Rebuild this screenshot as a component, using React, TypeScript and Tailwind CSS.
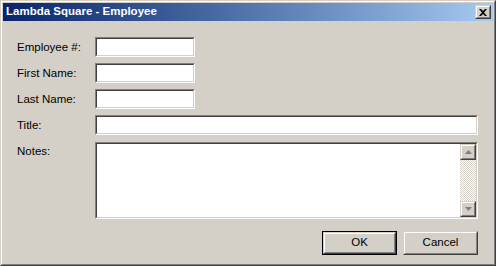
import React from 'react';

const FONT = "font-['Liberation_Sans',Arial,sans-serif]";

function Sunken({ className, children }: { className: string; children?: React.ReactNode }) {
  return (
    <div className={`border border-t-[#808080] border-l-[#808080] border-b-white border-r-white ${className}`}>
      <div className="h-full w-full border border-t-[#404040] border-l-[#404040] border-b-[#d4d0c8] border-r-[#d4d0c8] bg-white">
        {children}
      </div>
    </div>
  );
}

function Raised({ className, children }: { className: string; children?: React.ReactNode }) {
  return (
    <div className={`border border-t-[#d4d0c8] border-l-[#d4d0c8] border-b-[#404040] border-r-[#404040] bg-[#d4d0c8] ${className}`}>
      <div className="flex h-full w-full items-center justify-center border border-t-white border-l-white border-b-[#808080] border-r-[#808080]">
        {children}
      </div>
    </div>
  );
}

function Arrow({ up }: { up?: boolean }) {
  return (
    <svg width="7" height="4" viewBox="0 0 7 4">
      {up ? (
        <polygon points="3.5,0 7,4 0,4" fill="#808080" />
      ) : (
        <polygon points="0,0 7,0 3.5,4" fill="#808080" />
      )}
    </svg>
  );
}

function Field({ label, wide }: { label: string; wide?: boolean }) {
  return (
    <div className="flex h-5 items-center">
      <span className="w-[78px] pt-px text-[11.5px] text-black">{label}</span>
      <Sunken className={wide ? 'h-5 w-[383px]' : 'h-5 w-[100px]'} />
    </div>
  );
}

export default function App() {
  return (
    <div className={`h-[266px] w-[496px] ${FONT}`}>
      <div className="h-full w-full border border-t-[#d4d0c8] border-l-[#d4d0c8] border-b-[#404040] border-r-[#404040]">
        <div className="flex h-full w-full flex-col border border-t-white border-l-white border-b-[#808080] border-r-[#808080] bg-[#d4d0c8] p-px">
          {/* Title bar */}
          <div className="flex h-[18px] shrink-0 items-center justify-between bg-linear-to-r from-[#0a246a] to-[#a6caf0] pl-[3px] pr-[2px]">
            <span className="text-[11.5px] font-bold text-white">Lambda Square - Employee</span>
            <Raised className="h-[14px] w-4">
              <svg width="8" height="7" viewBox="0 0 8 7">
                <path d="M0 0h2l2 2 2-2h2L5 3.5 8 7H6L4 5 2 7H0l3-3.5z" fill="#000" />
              </svg>
            </Raised>
          </div>

          {/* Form */}
          <div className="flex flex-col pl-[14px] pt-4">
            <div className="flex flex-col gap-[6px]">
              <Field label="Employee #:" />
              <Field label="First Name:" />
              <Field label="Last Name:" />
              <Field label="Title:" wide />
            </div>

            <div className="mt-[7px] flex">
              <span className="w-[78px] pt-px text-[11.5px] text-black">Notes:</span>
              <Sunken className="h-[77px] w-[383px]">
                <div className="flex h-full justify-end">
                  <div className="flex h-full w-4 flex-col bg-[repeating-conic-gradient(#fff_0_25%,#d4d0c8_0_50%)] bg-[length:2px_2px]">
                    <Raised className="h-4 w-4">
                      <Arrow up />
                    </Raised>
                    <div className="flex-1" />
                    <Raised className="h-4 w-4">
                      <Arrow />
                    </Raised>
                  </div>
                </div>
              </Sunken>
            </div>

            <div className="mt-[12px] flex gap-[6px] pl-[305px]">
              <div className="h-[24px] w-[75px] border border-black">
                <Raised className="h-full w-full">
                  <span className="text-[11.5px] text-black">OK</span>
                </Raised>
              </div>
              <Raised className="h-[24px] w-[75px]">
                <span className="text-[11.5px] text-black">Cancel</span>
              </Raised>
            </div>
          </div>
        </div>
      </div>
    </div>
  );
}
